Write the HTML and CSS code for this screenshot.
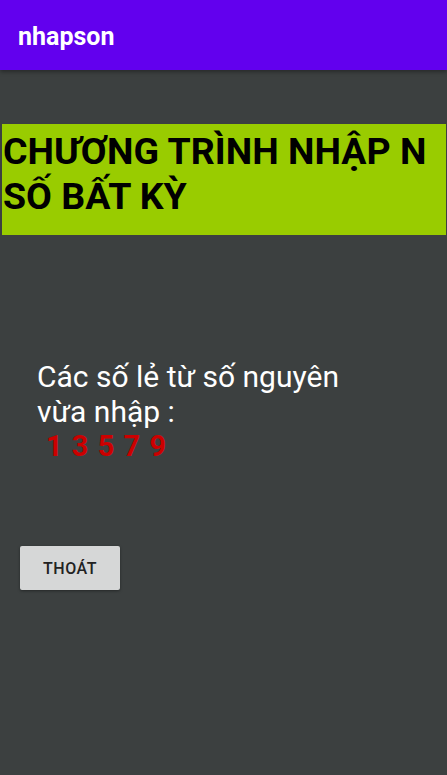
FILE: index.html
```html
<!DOCTYPE html>
<html>
<head>
<meta charset="utf-8">
<link rel="stylesheet" href="styles.css">
</head>
<body>
<header class="appbar"><span class="appbar-title">nhapson</span></header>
<main class="content">
  <h1 class="banner">CHƯƠNG TRÌNH NHẬP N SỐ BẤT KỲ</h1>
  <div class="result">
    <p class="label">Các số lẻ từ số nguyên vừa nhập :</p>
    <p class="numbers">1 3 5 7 9</p>
  </div>
  <button class="btn">THOÁT</button>
</main>
</body>
</html>
```
FILE: styles.css
```css
* { box-sizing: border-box; }
html, body { margin: 0; padding: 0; }
body {
  width: 447px;
  height: 775px;
  background: #3c4040;
  font-family: Roboto, "Noto Sans", sans-serif;
  overflow: hidden;
}
.appbar {
  height: 70px;
  background: #6200ee;
  display: flex;
  align-items: center;
  padding: 3px 0 0 18px;
  box-shadow: 0 2px 4px rgba(0,0,0,0.35);
  position: relative;
}
.appbar-title {
  color: #fff;
  font-size: 25px;
  font-weight: 700;
}
.content {
  padding-top: 54px;
}
.banner {
  margin: 0 1px 0 2px;
  height: 111px;
  background: #99cc00;
  color: #000;
  font-size: 37.5px;
  font-weight: 700;
  line-height: 45px;
  padding: 5px 0 0 1px;
}
.result {
  margin: 124px 0 0 37px;
  width: 340px;
}
.label {
  margin: 0;
  color: #fff;
  font-size: 30px;
  line-height: 35px;
}
.numbers {
  margin: 0;
  padding-left: 9px;
  color: #cc0000;
  font-weight: 700;
  font-size: 29px;
  line-height: 35px;
  letter-spacing: 1px;
}
.btn {
  margin: 82px 0 0 20px;
  width: 100px;
  height: 44px;
  background: #d6d7d7;
  border: none;
  border-radius: 2px;
  box-shadow: 0 1px 3px rgba(0,0,0,0.4);
  font-family: Roboto, sans-serif;
  font-size: 16px;
  font-weight: 500;
  color: #222;
  letter-spacing: 0.5px;
  display: block;
}
```
